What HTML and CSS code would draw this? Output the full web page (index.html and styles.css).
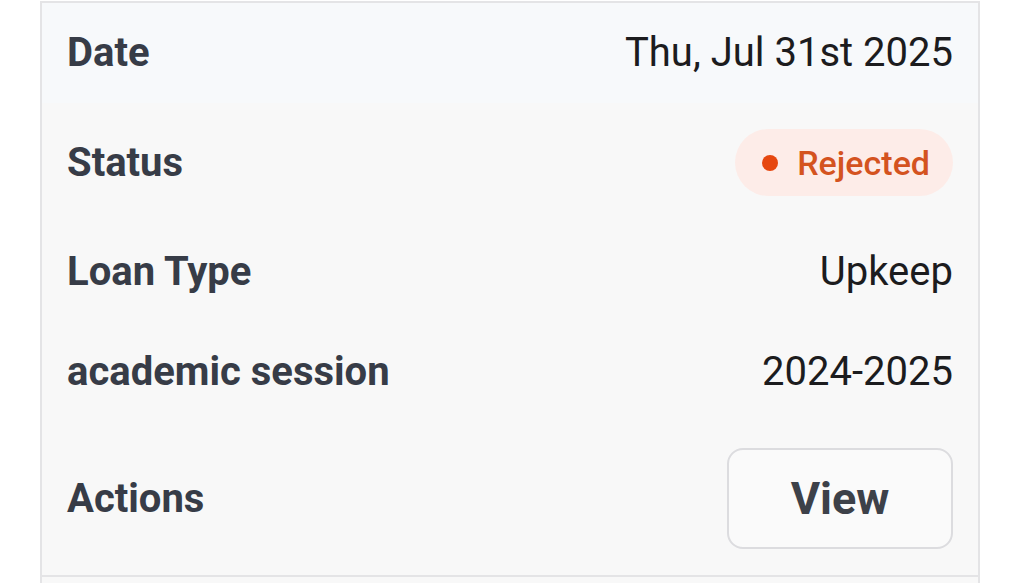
FILE: index.html
```html
<!DOCTYPE html>
<html lang="en">
<head>
    <meta charset="UTF-8">
    <title>Loan application</title>
    <link rel="stylesheet" href="styles.css">
</head>
<body>
<div class="list">
    <div class="card">
        <div class="row row-head">
            <span class="label">Date</span>
            <span class="value">Thu, Jul 31st 2025</span>
        </div>
        <div class="row">
            <span class="label">Status</span>
            <span class="badge"><span class="dot"></span>Rejected</span>
        </div>
        <div class="row">
            <span class="label">Loan Type</span>
            <span class="value">Upkeep</span>
        </div>
        <div class="row">
            <span class="label">academic session</span>
            <span class="value">2024-2025</span>
        </div>
        <div class="row">
            <span class="label">Actions</span>
            <button class="view-btn" type="button">View</button>
        </div>
    </div>
    <div class="card card-next"></div>
</div>
</body>
</html>
```

FILE: styles.css
```css
body {
    margin: 0;
    background: #ffffff;
    font-family: Roboto, "Liberation Sans", sans-serif;
}

.list {
    width: 940px;
    margin-left: 40px;
    padding-top: 1px;
}

.card {
    background: #f8f8f8;
    border: 2px solid #e4e4e6;
}

.card-next {
    height: 6px;
    border-top: none;
    border-bottom: none;
}

.row {
    display: flex;
    align-items: center;
    justify-content: space-between;
    padding: 26px 25px 26px 25px;
}

.row-head {
    background: #f7f9fb;
}

.label {
    font-size: 40px;
    line-height: 48px;
    font-weight: bold;
    color: #373c47;
}

.value {
    font-size: 40px;
    line-height: 48px;
    color: #1c1c1e;
}

.badge {
    display: flex;
    align-items: center;
    height: 67px;
    padding: 0 23px 0 27px;
    border-radius: 34px;
    background: #fdece8;
    color: #d4531f;
    font-size: 34px;
    font-weight: 500;
}

.dot {
    width: 16px;
    height: 16px;
    border-radius: 50%;
    background: #e6470f;
    margin-right: 19px;
}

.view-btn {
    width: 226px;
    height: 101px;
    border: 2px solid #dcdcdf;
    border-radius: 16px;
    background: #fafafa;
    font-family: Roboto, "Liberation Sans", sans-serif;
    font-size: 45px;
    font-weight: bold;
    color: #3d4149;
}
```
